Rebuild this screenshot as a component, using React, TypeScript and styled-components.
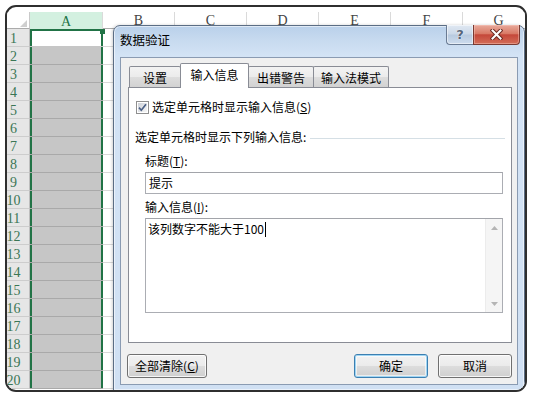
import React from "react";
import styled, { createGlobalStyle, css } from "styled-components";

const GlobalStyle = createGlobalStyle`
  html, body { margin: 0; padding: 0; background: #fff; }
  body {
    width: 533px; height: 396px; overflow: hidden;
    font-family: "Noto Sans CJK SC", "Noto Sans", sans-serif;
    font-size: 12px; color: #000;
  }
  * { box-sizing: border-box; }
`;

const Page = styled.div`
  padding: 5px 0 0 5px;
`;

const Frame = styled.div`
  position: relative;
  width: 522px;
  height: 387px;
  border: 2px solid #2f2f2f;
  border-radius: 11px;
  overflow: hidden;
  background: #fff;
`;

/* ---------- spreadsheet ---------- */
const Sheet = styled.div`
  display: flex;
  flex-direction: column;
  padding-top: 5px;
`;

const HeaderRow = styled.div`
  display: grid;
  grid-template-columns: 23px 73px repeat(6, 72px);
  height: 17px;
`;

const Corner = styled.div`
  background: #fff;
  border-bottom: 1px solid #ababab;
  border-right: 1px solid #c9c9c9;
  display: flex;
`;

const ColHead = styled.div<{ $selected?: boolean }>`
  display: flex;
  justify-content: center;
  align-items: flex-end;
  font-family: "Liberation Serif", serif;
  font-size: 14px;
  line-height: 14px;
  color: #444;
  background: #fff;
  border-right: 1px solid #dadada;
  border-bottom: 1px solid #ababab;
  ${(p) =>
    p.$selected &&
    css`
      background: #d3f0e0;
      color: #217346;
      border-bottom: none;
    `}
`;

const SheetRow = styled.div`
  display: grid;
  grid-template-columns: 23px 73px 1fr;
  height: 18px;
`;

const RowHead = styled.div`
  display: flex;
  justify-content: center;
  align-items: flex-end;
  padding-right: 9px;
  font-family: "Liberation Serif", serif;
  font-size: 14px;
  line-height: 14px;
  color: #3b7655;
  background: #e6e6e6;
  border-bottom: 1px solid #cdcdcd;
  border-right: 1px solid #bdbdbd;
`;

const SelCell = styled.div<{ $active?: boolean }>`
  position: relative;
  background: ${(p) => (p.$active ? "#fff" : "#c6c6c6")};
  border-bottom: 1px solid ${(p) => (p.$active ? "#c6c6c6" : "#a9a9a9")};
  box-shadow: inset 2px 0 0 #217346, inset -2px 0 0 #217346
    ${(p) => (p.$active ? ", inset 0 2px 0 #217346" : "")};
`;

const FillHandle = styled.span`
  position: absolute;
  top: 0;
  right: -2px;
  width: 5px;
  height: 5px;
  background: #217346;
`;

const PlainCell = styled.div`
  background: #fff;
  border-bottom: 1px solid #d9d9d9;
`;

/* ---------- dialog ---------- */
const Dialog = styled.div`
  position: absolute;
  left: 106px;
  top: 18px;
  width: 412px;
  height: 366px;
  display: flex;
  flex-direction: column;
  padding: 0 6px 5px;
  border: 1px solid #5b6d84;
  border-radius: 7px 7px 0 0;
  background: linear-gradient(
    180deg,
    #b9d0ea 0px,
    #c7daef 14px,
    #d3e3f5 30px,
    #d0e0f3 100%
  );
  box-shadow: inset 0 0 0 1px rgba(255, 255, 255, 0.55),
    -1px 0 3px rgba(0, 0, 0, 0.18);
`;

const TitleBar = styled.div`
  display: flex;
  align-items: flex-start;
  height: 31px;
  flex-shrink: 0;
`;

const Title = styled.div`
  padding-top: 6px;
  line-height: 16px;
  font-size: 12.5px;
  color: #000;
`;

const Captions = styled.div`
  margin-left: auto;
  margin-top: -1px;
  margin-right: -2px;
  display: flex;
`;

const HelpBtn = styled.div`
  width: 27px;
  height: 20px;
  display: flex;
  align-items: center;
  justify-content: center;
  border: 1px solid #6a7b93;
  border-top: none;
  border-right: none;
  border-radius: 0 0 0 4px;
  background: linear-gradient(180deg, #e0e8f2 0%, #cbd8e8 48%, #b8cadf 52%, #cddcee 100%);
  box-shadow: inset 0 0 0 1px rgba(255, 255, 255, 0.5);
  font-family: "DejaVu Sans", sans-serif;
  font-weight: bold;
  font-size: 13px;
  line-height: 13px;
  color: #56657a;
  text-shadow: 0 0 1px #fff, 0 0 1px #fff;
`;

const CloseBtn = styled.div`
  width: 47px;
  height: 20px;
  display: flex;
  align-items: center;
  justify-content: center;
  border: 1px solid #7a3a32;
  border-top: none;
  border-radius: 0 0 4px 0;
  background: linear-gradient(180deg, #e8aa9c 0%, #d97a66 45%, #c5483a 52%, #d36d58 100%);
  box-shadow: inset 0 0 0 1px rgba(255, 210, 200, 0.4);
`;

const Client = styled.div`
  flex: 1;
  display: flex;
  flex-direction: column;
  background: #f0f0f0;
  border: 1px solid #8a9bb2;
  padding: 5px 5px 6px 7px;
`;

const TabStrip = styled.div`
  display: flex;
  align-items: flex-end;
  height: 24px;
  padding-left: 1px;
  position: relative;
  z-index: 1;
`;

const Tab = styled.div<{ $w: number; $selected?: boolean }>`
  width: ${(p) => p.$w}px;
  height: 21px;
  display: flex;
  align-items: center;
  justify-content: center;
  border: 1px solid #898c95;
  border-bottom: none;
  border-radius: 2px 2px 0 0;
  background: linear-gradient(180deg, #f3f3f3 0%, #ebebeb 50%, #dddddd 51%, #d2d2d2 100%);
  line-height: 16px;
  padding-top: 1px;
  & + & {
    margin-left: -1px;
  }
  ${(p) =>
    p.$selected &&
    css`
      height: 25px;
      margin-bottom: -1px;
      padding-top: 0;
      padding-bottom: 2px;
      background: #fff;
      position: relative;
      z-index: 2;
    `}
`;

const Panel = styled.div`
  height: 256px;
  flex-shrink: 0;
  background: #fff;
  border: 1px solid #898c95;
  display: flex;
  flex-direction: column;
`;

const CheckRow = styled.label`
  display: flex;
  align-items: center;
  height: 16px;
  margin: 11px 0 0 7px;
  line-height: 16px;
  gap: 3px;
`;

const GroupHead = styled.div`
  display: flex;
  align-items: center;
  height: 16px;
  margin: 14px 6px 0 6px;
  line-height: 16px;
`;

const GroupLine = styled.div`
  flex: 1;
  height: 1px;
  margin-left: 4px;
  margin-top: 2px;
  background: #d5dfe5;
`;

const Fields = styled.div`
  display: flex;
  flex-direction: column;
  margin: 0 8px 0 16px;
`;

const FieldLabel = styled.div<{ $top: number }>`
  height: 16px;
  line-height: 16px;
  margin-top: ${(p) => p.$top}px;
`;

const TextBox = styled.div`
  height: 22px;
  margin-top: 3px;
  border: 1px solid #abadb3;
  border-top-color: #a2a4aa;
  background: #fff;
  padding: 2px 3px;
  line-height: 16px;
`;

const TextArea = styled.div`
  height: 95px;
  margin-top: 3px;
  border: 1px solid #abadb3;
  border-top-color: #a2a4aa;
  background: #fff;
  display: flex;
`;

const AreaText = styled.div`
  flex: 1;
  padding: 2px 2px;
  line-height: 16px;
  display: flex;
  align-items: center;
  align-self: flex-start;
`;

const Caret = styled.span`
  display: inline-block;
  width: 1px;
  height: 15px;
  background: #000;
  margin-left: 1px;
`;

const ScrollBar = styled.div`
  width: 17px;
  display: flex;
  flex-direction: column;
  justify-content: space-between;
  background: #f5f5f5;
  border-left: 1px solid #ececec;
`;

const ScrollArrow = styled.div`
  height: 17px;
  display: flex;
  align-items: center;
  justify-content: center;
`;

const ButtonRow = styled.div`
  display: flex;
  margin-top: 11px;
  margin-left: -1px;
  height: 24px;
  gap: 10px;
`;

const Spacer = styled.div`
  flex: 1;
`;

const Button = styled.div<{ $w: number; $default?: boolean }>`
  width: ${(p) => p.$w}px;
  height: 24px;
  display: flex;
  align-items: center;
  justify-content: center;
  border: 1px solid #707070;
  border-radius: 3px;
  background: linear-gradient(180deg, #f2f2f2 0%, #ebebeb 50%, #dddddd 51%, #cfcfcf 100%);
  box-shadow: inset 0 0 0 1px rgba(255, 255, 255, 0.8);
  line-height: 16px;
  ${(p) =>
    p.$default &&
    css`
      border-color: #3c7fb1;
      box-shadow: inset 0 0 0 1px #9fd5f3, inset 0 0 0 2px rgba(255, 255, 255, 0.6);
    `}
`;

const CheckIcon = () => (
  <svg width="13" height="13" viewBox="0 0 13 13">
    <defs>
      <linearGradient id="cbg" x1="0" y1="0" x2="1" y2="1">
        <stop offset="0" stopColor="#cdd1d8" />
        <stop offset="1" stopColor="#f7f7f7" />
      </linearGradient>
    </defs>
    <rect x="0.5" y="0.5" width="12" height="12" fill="#fff" stroke="#8f8f8f" />
    <rect x="2" y="2" width="9" height="9" fill="url(#cbg)" />
    <path d="M3 6.6 L5.3 9.2 L10 3.3" fill="none" stroke="#4a5f85" strokeWidth="1.7" />
  </svg>
);

const CloseIcon = () => (
  <svg width="13" height="11" viewBox="0 0 13 11">
    <path d="M2.5 1.5 L10.5 9.5 M10.5 1.5 L2.5 9.5" stroke="#6b2a22" strokeWidth="4" strokeLinecap="square" />
    <path d="M2.5 1.5 L10.5 9.5 M10.5 1.5 L2.5 9.5" stroke="#fff" strokeWidth="2" strokeLinecap="square" />
  </svg>
);

const Arrow = ({ up }: { up?: boolean }) => (
  <svg width="7" height="4" viewBox="0 0 7 4">
    <polygon points={up ? "0,4 7,4 3.5,0" : "0,0 7,0 3.5,4"} fill="#b5b5b5" />
  </svg>
);

export default function App() {
  const rows = Array.from({ length: 20 }, (_, i) => i + 1);
  const cols = ["B", "C", "D", "E", "F", "G"];
  return (
    <>
      <GlobalStyle />
      <Page>
        <Frame>
          <Sheet>
            <HeaderRow>
              <Corner>
                <svg width="22" height="16">
                  <polygon points="20,8 20,15 13,15" fill="#cfcfcf" />
                </svg>
              </Corner>
              <ColHead $selected>A</ColHead>
              {cols.map((c) => (
                <ColHead key={c}>{c}</ColHead>
              ))}
            </HeaderRow>
            {rows.map((r) => (
              <SheetRow key={r}>
                <RowHead>{r}</RowHead>
                <SelCell $active={r === 1}>{r === 1 && <FillHandle />}</SelCell>
                <PlainCell />
              </SheetRow>
            ))}
          </Sheet>

          <Dialog>
            <TitleBar>
              <Title>数据验证</Title>
              <Captions>
                <HelpBtn>?</HelpBtn>
                <CloseBtn>
                  <CloseIcon />
                </CloseBtn>
              </Captions>
            </TitleBar>
            <Client>
              <TabStrip>
                <Tab $w={52}>设置</Tab>
                <Tab $w={69} $selected>
                  输入信息
                </Tab>
                <Tab $w={66}>出错警告</Tab>
                <Tab $w={76}>输入法模式</Tab>
              </TabStrip>
              <Panel>
                <CheckRow>
                  <CheckIcon />
                  <span>
                    选定单元格时显示输入信息(<u>S</u>)
                  </span>
                </CheckRow>
                <GroupHead>
                  <span>选定单元格时显示下列输入信息:</span>
                  <GroupLine />
                </GroupHead>
                <Fields>
                  <FieldLabel $top={8}>
                    标题(<u>T</u>):
                  </FieldLabel>
                  <TextBox>提示</TextBox>
                  <FieldLabel $top={5}>
                    输入信息(<u>I</u>):
                  </FieldLabel>
                  <TextArea>
                    <AreaText>
                      该列数字不能大于100
                      <Caret />
                    </AreaText>
                    <ScrollBar>
                      <ScrollArrow>
                        <Arrow up />
                      </ScrollArrow>
                      <ScrollArrow>
                        <Arrow />
                      </ScrollArrow>
                    </ScrollBar>
                  </TextArea>
                </Fields>
              </Panel>
              <ButtonRow>
                <Button $w={80}>
                  全部清除(<u>C</u>)
                </Button>
                <Spacer />
                <Button $w={74} $default>
                  确定
                </Button>
                <Button $w={74}>取消</Button>
              </ButtonRow>
            </Client>
          </Dialog>
        </Frame>
      </Page>
    </>
  );
}
